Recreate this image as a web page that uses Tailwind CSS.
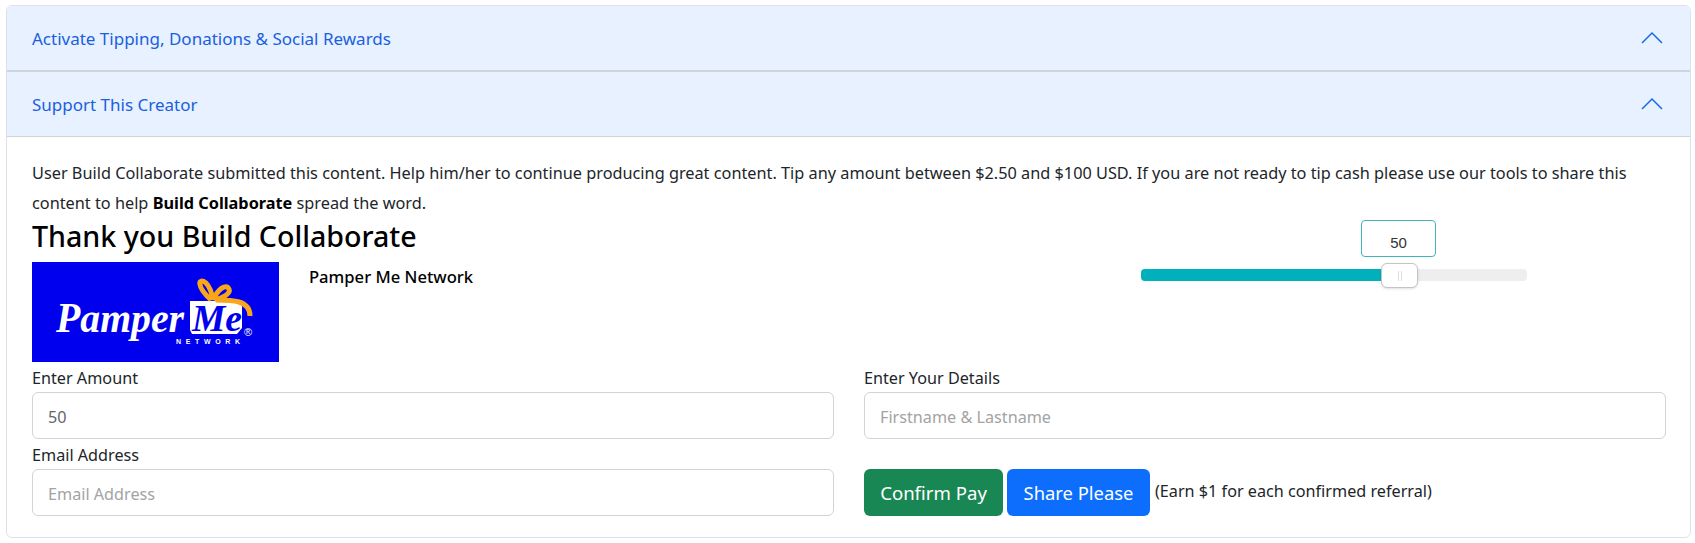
<!DOCTYPE html>
<html><head>
<title>Support This Creator</title>
<script src="https://cdn.jsdelivr.net/npm/@tailwindcss/browser@4"></script>
</head>
<body class="bg-white font-['Noto_Sans',sans-serif] text-[#212529] overflow-hidden">
  <div class="ml-[6px] mr-[4px] mt-[5px] h-[533px] border border-[#dee2e6] rounded-md overflow-hidden">
    <div class="h-[66px] bg-[#e7f1ff] border-b-2 border-[#ced4da] pl-[25px] pr-[27px] flex items-center justify-between text-[#1a5fe0] text-[17px]">
      <span class="pt-[2px]">Activate Tipping, Donations &amp; Social Rewards</span>
      <svg class="w-[22px] h-[14px]" viewBox="0 0 22 14" fill="none" stroke="#1a6ae6" stroke-width="1.5"><path d="M1 12 L11 2 L21 12"/></svg>
    </div>
    <div class="h-[65px] bg-[#e7f1ff] border-b border-[#ced4da] pl-[25px] pr-[27px] flex items-center justify-between text-[#1a5fe0] text-[17px]">
      <span class="pt-[2px]">Support This Creator</span>
      <svg class="w-[22px] h-[14px]" viewBox="0 0 22 14" fill="none" stroke="#1a6ae6" stroke-width="1.5"><path d="M1 12 L11 2 L21 12"/></svg>
    </div>
    <div class="pl-[25px] pr-[24px] pt-[21px]">
      <p class="text-[16.3px] leading-[30px]">User Build Collaborate submitted this content. Help him/her to continue producing great content. Tip any amount between $2.50 and $100 USD. If you are not ready to tip cash please use our tools to share this content to help <b class="font-bold text-black">Build Collaborate</b> spread the word.</p>
      <div class="flex">
        <div class="w-[1100px]">
          <h2 class="text-[28.6px] leading-[35px] font-medium text-black">Thank you Build Collaborate</h2>
          <div class="flex mt-[9px]">
            <svg class="w-[247px] h-[100px] shrink-0" viewBox="0 0 247 100">
              <rect width="247" height="100" fill="#0000ef"/>
              <path d="M158 39 H210 V66 L205 72 H160 L158 68 Z" fill="#fff"/>
              <path d="M179 38 C164 24 166 15 174 21 C178 25 180 32 181 38 M181 38 C186 27 194 21 197 27 C199 32 190 36 183 38 M184 38 C200 38 218 38 218 54" fill="none" stroke="#f9a61a" stroke-width="5"/>
              <text x="24" y="70" textLength="128" lengthAdjust="spacingAndGlyphs" font-family="Liberation Serif" font-style="italic" font-weight="bold" font-size="42" fill="#fff">Pamper</text>
              <text x="160" y="69" textLength="50" lengthAdjust="spacingAndGlyphs" font-family="Liberation Serif" font-style="italic" font-weight="bold" font-size="38" fill="#0000ef">Me</text>
              <text x="144" y="82" textLength="64" font-family="Liberation Sans" font-size="7" font-weight="bold" fill="#fff">NETWORK</text>
              <text x="212" y="74" font-family="Liberation Sans" font-size="11" fill="#fff">®</text>
            </svg>
            <div class="ml-[30px] mt-[3px] text-[16.6px] font-medium text-black">Pamper Me Network</div>
          </div>
        </div>
        <div class="relative">
          <div class="absolute left-[229px] top-[2px] w-[75px] h-[37px] border border-[#3fb6bb] rounded bg-white text-[15px] text-center pt-[11px] text-[#333] font-['Liberation_Sans']">50</div>
          <div class="ml-[9px] mt-[51px] w-[386px] h-3 bg-[#eeeeee] rounded relative">
            <div class="h-3 w-[245px] bg-[#00b1bb] rounded-l"></div>
            <div class="absolute left-[240px] top-[-6px] w-[37px] h-[25px] bg-white border border-[#c4c4c4] rounded-md shadow flex items-center justify-center gap-[2px]">
              <span class="w-px h-[10px] bg-[#ddd]"></span><span class="w-px h-[10px] bg-[#ddd]"></span>
            </div>
          </div>
        </div>
      </div>
      <div class="grid grid-cols-[802px_802px] gap-x-[30px] text-[16.2px] mt-[4px]">
        <div>
          <label class="block leading-[24px]">Enter Amount</label>
          <input class="block w-full h-[47px] mt-[2px] px-[15px] pt-[2px] border border-[#ced4da] rounded-md text-[16.2px] text-[#666]" value="50">
        </div>
        <div>
          <label class="block leading-[24px]">Enter Your Details</label>
          <input class="block w-full h-[47px] mt-[2px] px-[15px] pt-[2px] border border-[#ced4da] rounded-md text-[16.2px] placeholder:text-[#a3a3a3]" placeholder="Firstname &amp; Lastname">
        </div>
        <div class="mt-[4px]">
          <label class="block leading-[24px]">Email Address</label>
          <input class="block w-full h-[47px] mt-[2px] px-[15px] pt-[2px] border border-[#ced4da] rounded-md text-[16.2px] placeholder:text-[#a3a3a3]" placeholder="Email Address">
        </div>
        <div class="flex items-center mt-[30px] gap-[4px]">
          <button class="h-[47px] w-[139px] rounded-md bg-[#198754] text-white text-[18.6px]">Confirm Pay</button>
          <button class="h-[47px] w-[143px] rounded-md bg-[#0d6efd] text-white text-[18.4px]">Share Please</button>
          <span class="ml-[1px] pb-[3px]">(Earn $1 for each confirmed referral)</span>
        </div>
      </div>
    </div>
  </div>
</body></html>
